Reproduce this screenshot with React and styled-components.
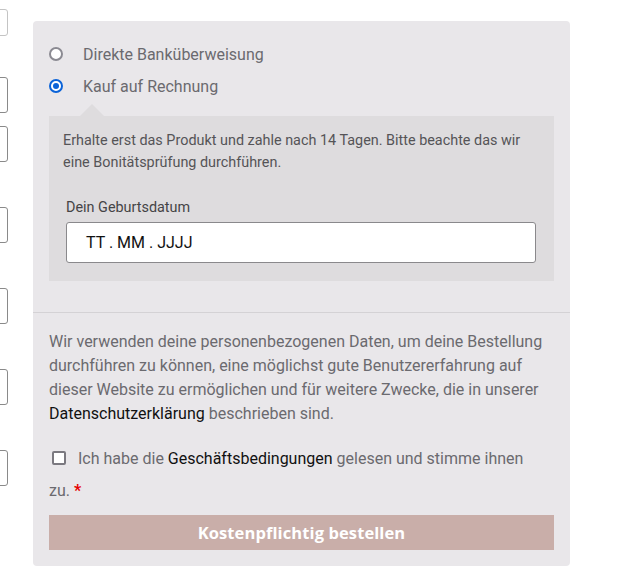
import React from 'react';
import styled, { createGlobalStyle } from 'styled-components';

const GlobalStyle = createGlobalStyle`
    * { box-sizing: border-box; }
    body {
        margin: 0;
        background: #fff;
        font-family: Roboto, "Noto Sans", sans-serif;
    }
`

const Page = styled.div`
    display: flex;
    flex-direction: row;
    align-items: flex-start;
    gap: 25px;
    padding-top: 21px;
`

const LeftColumn = styled.div`
    width: 8px;
    margin-top: -21px;
    overflow: hidden;
    display: flex;
    flex-direction: column;
    align-items: flex-end;
`

const GhostInput = styled.div`
    flex: none;
    width: 240px;
    height: ${p => p.$h}px;
    margin-top: ${p => p.$top}px;
    border: 1px solid ${p => p.$light ? '#c4c4c4' : '#8a8a8a'};
    border-radius: 3px;
    background: #fff;
`

const Panel = styled.div`
    width: 537px;
    background: #e9e7ea;
    border-radius: 4px;
    padding-bottom: 16px;
`

const Methods = styled.ul`
    list-style: none;
    margin: 0;
    padding: 17px 16px 31px;
    border-bottom: 1px solid #d4d2d5;
`

const Method = styled.li`
    display: flex;
    align-items: center;
    height: 32px;
    color: #6b6a6f;
    font-size: 16px;
`

const Radio = styled.span`
    flex: none;
    width: 14px;
    height: 14px;
    margin: 0 20px 0 0;
    border-radius: 50%;
    border: 2px solid ${p => p.$checked ? '#0b63d8' : '#8b8a92'};
    background: #fff;
    display: flex;
    align-items: center;
    justify-content: center;

    &::after {
        content: '';
        display: ${p => p.$checked ? 'block' : 'none'};
        width: 6px;
        height: 6px;
        border-radius: 50%;
        background: #0b63d8;
    }
`

const MethodBox = styled.div`
    position: relative;
    margin-top: 14px;
    background: #dedcde;
    padding: 14px 18px 18px 14px;

    &::before {
        content: '';
        position: absolute;
        top: -12px;
        left: 31px;
        border-left: 12px solid transparent;
        border-right: 12px solid transparent;
        border-bottom: 12px solid #dedcde;
    }

    p {
        margin: 0;
        font-size: 14.4px;
        line-height: 22px;
        color: #555457;
    }
`

const Field = styled.div`
    margin-top: 24px;
    padding-left: 3px;

    label {
        display: block;
        font-size: 14.4px;
        line-height: 20px;
        color: #454446;
        margin-bottom: 4px;
    }
`

const DateInput = styled.div`
    height: 41px;
    background: #fff;
    border: 1px solid #8a898c;
    border-radius: 3px;
    padding-left: 19px;
    display: flex;
    align-items: center;
    font-size: 16px;
    color: #111;
`

const Bottom = styled.div`
    padding: 17px 16px 0;

    a {
        color: #111;
        text-decoration: none;
    }
`

const Privacy = styled.p`
    margin: 0;
    font-size: 16px;
    line-height: 24px;
    color: #6b6a6f;
`

const Terms = styled.label`
    display: block;
    margin-top: 17px;
    padding-right: 24px;
    font-size: 16px;
    line-height: 32px;
    color: #6b6a6f;

    .req {
        color: #e60000;
        font-weight: 700;
    }
`

const Checkbox = styled.span`
    display: inline-block;
    vertical-align: -1px;
    width: 14px;
    height: 14px;
    margin: 0 12px 0 3px;
    border: 2px solid #7b7980;
    border-radius: 2px;
    background: #fff;
`

const OrderButton = styled.button`
    display: block;
    width: 100%;
    height: 35px;
    margin-top: 8px;
    border: none;
    background: #c9aea9;
    color: #fff;
    font-family: "Open Sans", sans-serif;
    font-weight: 700;
    font-size: 16.5px;
    letter-spacing: 0.1px;
    cursor: pointer;
`

const leftFields = [
    { top: 9, h: 27, light: true },
    { top: 41, h: 36 },
    { top: 13, h: 36 },
    { top: 45, h: 36 },
    { top: 45, h: 36 },
    { top: 45, h: 36 },
    { top: 45, h: 36 },
]

const App = () => {
    return (
        <>
            <GlobalStyle />
            <Page>
                <LeftColumn>
                    {leftFields.map((f, i) => (
                        <GhostInput key={i} $top={f.top} $h={f.h} $light={f.light} />
                    ))}
                </LeftColumn>
                <Panel>
                    <Methods>
                        <Method><Radio />Direkte Banküberweisung</Method>
                        <Method><Radio $checked />Kauf auf Rechnung</Method>
                        <MethodBox>
                            <p>Erhalte erst das Produkt und zahle nach 14 Tagen. Bitte beachte das wir eine Bonitätsprüfung durchführen.</p>
                            <Field>
                                <label>Dein Geburtsdatum</label>
                                <DateInput>TT . MM . JJJJ</DateInput>
                            </Field>
                        </MethodBox>
                    </Methods>
                    <Bottom>
                        <Privacy>
                            Wir verwenden deine personenbezogenen Daten, um deine Bestellung durchführen zu können, eine möglichst gute Benutzererfahrung auf dieser Website zu ermöglichen und für weitere Zwecke, die in unserer <a href='#'>Datenschutzerklärung</a> beschrieben sind.
                        </Privacy>
                        <Terms>
                            <Checkbox />Ich habe die <a href='#'>Geschäftsbedingungen</a> gelesen und stimme ihnen zu. <span className="req">*</span>
                        </Terms>
                        <OrderButton>Kostenpflichtig bestellen</OrderButton>
                    </Bottom>
                </Panel>
            </Page>
        </>
    )
}

export default App
